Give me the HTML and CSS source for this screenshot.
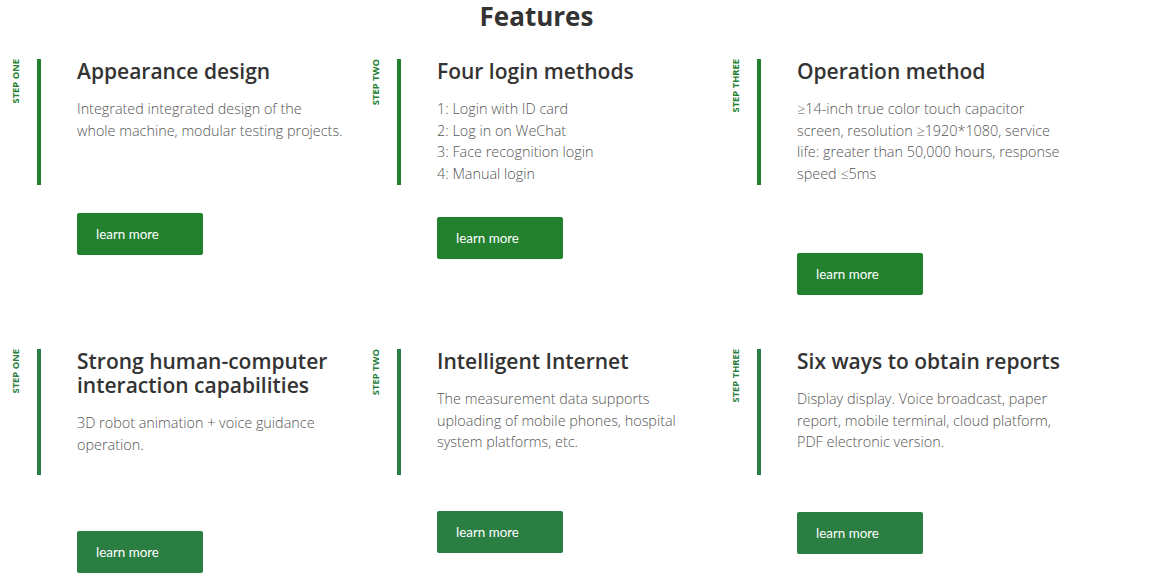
FILE: index.html
```html
<!DOCTYPE html>
<html lang="en">
<head>
<meta charset="utf-8">
<title>Features</title>
<link rel="stylesheet" href="styles.css">
</head>
<body>
<section class="features">
  <h2 class="features-title">Features</h2>
  <div class="grid">
    <div class="card">
      <div class="step"><span>STEP ONE</span></div>
      <div class="card-main">
        <div class="card-text">
          <h3>Appearance design</h3>
          <p>Integrated integrated design of the whole machine, modular testing projects.</p>
        </div>
        <a class="btn gap-28" href="#">learn more</a>
      </div>
    </div>
    <div class="card">
      <div class="step"><span>STEP TWO</span></div>
      <div class="card-main">
        <div class="card-text">
          <h3>Four login methods</h3>
          <p>1: Login with ID card<br>2: Log in on WeChat<br>3: Face recognition login<br>4: Manual login</p>
        </div>
        <a class="btn gap-32" href="#">learn more</a>
      </div>
    </div>
    <div class="card">
      <div class="step"><span>STEP THREE</span></div>
      <div class="card-main">
        <div class="card-text">
          <h3>Operation method</h3>
          <p>≥14-inch true color touch capacitor screen, resolution ≥1920*1080, service life: greater than 50,000 hours, response speed ≤5ms</p>
        </div>
        <a class="btn gap-68" href="#">learn more</a>
      </div>
    </div>
    <div class="card alt">
      <div class="step"><span>STEP ONE</span></div>
      <div class="card-main">
        <div class="card-text">
          <h3>Strong human-computer interaction capabilities</h3>
          <p>3D robot animation + voice guidance operation.</p>
        </div>
        <a class="btn gap-56" href="#">learn more</a>
      </div>
    </div>
    <div class="card alt">
      <div class="step"><span>STEP TWO</span></div>
      <div class="card-main">
        <div class="card-text">
          <h3>Intelligent Internet</h3>
          <p>The measurement data supports uploading of mobile phones, hospital system platforms, etc.</p>
        </div>
        <a class="btn gap-36" href="#">learn more</a>
      </div>
    </div>
    <div class="card alt">
      <div class="step"><span>STEP THREE</span></div>
      <div class="card-main">
        <div class="card-text">
          <h3>Six ways to obtain reports</h3>
          <p>Display display. Voice broadcast, paper report, mobile terminal, cloud platform, PDF electronic version.</p>
        </div>
        <a class="btn gap-37" href="#">learn more</a>
      </div>
    </div>
  </div>
</section>
</body>
</html>
```
FILE: styles.css
```css
* { box-sizing: border-box; }
html, body { margin: 0; padding: 0; background: #fff; }
body { font-family: "Open Sans", "Noto Sans", sans-serif; color: #333; }

.features-title {
  margin: 0;
  width: 1073px;
  text-align: center;
  font-size: 26px;
  line-height: 32px;
  font-weight: 700;
  color: #333;
}

.grid {
  margin-top: 27px;
  display: grid;
  grid-template-columns: repeat(3, 360px);
  row-gap: 54px;
  align-items: start;
}

.card {
  display: flex;
  align-items: flex-start;
  --green: #22802f;
}
.card.alt { --green: #2b7e42; }

.step {
  width: 37px;
  flex: none;
  padding-left: 11px;
}
.step span {
  display: inline-block;
  writing-mode: vertical-rl;
  transform: rotate(180deg);
  font-size: 9.4px;
  line-height: 10px;
  font-weight: 700;
  color: var(--green);
}

.card-main { flex: 1; }

.card-text {
  border-left: 4px solid var(--green);
  min-height: 126px;
  padding-left: 36px;
}
.card-text h3 {
  margin: 0;
  max-width: 270px;
  font-size: 21px;
  line-height: 24px;
  font-weight: 600;
  color: #333;
}
.card-text p {
  margin: 15px 0 0;
  max-width: 266px;
  font-size: 14.4px;
  line-height: 21.5px;
  font-weight: 300;
  color: #555;
}

.btn {
  display: flex;
  align-items: center;
  width: 126px;
  height: 42px;
  margin-left: 40px;
  padding-left: 19px;
  background: var(--green);
  color: #fff;
  border-radius: 2px;
  text-decoration: none;
  font-family: Lato, "Open Sans", sans-serif;
  font-size: 13.4px;
  font-weight: 400;
}
.gap-28 { margin-top: 28px; }
.gap-32 { margin-top: 32px; }
.gap-36 { margin-top: 36px; }
.gap-37 { margin-top: 37px; }
.gap-56 { margin-top: 56px; }
.gap-68 { margin-top: 68px; }
```
